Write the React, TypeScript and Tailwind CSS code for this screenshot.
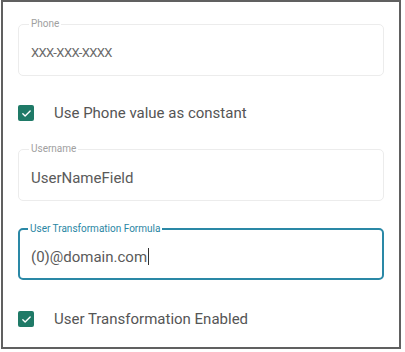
import React from 'react';

const font = { fontFamily: 'Roboto, "Liberation Sans", sans-serif' };

const Field = ({ label, value, focused, small }: { label: string; value: string; focused?: boolean; small?: boolean }) => (
  <div
    className={`relative h-[52px] rounded-[5px] flex items-center pl-[12px] pt-[6px] ${
      focused ? 'border-2 border-[#2a88a6]' : 'border border-[#ececec]'
    }`}
  >
    <span
      className={`absolute top-[-7px] bg-white px-[2px] text-[10px] leading-[12px] ${
        focused ? 'left-[8px] text-[#2a86a3]' : 'left-[10px] text-[#a0a0a0]'
      }`}
    >
      {label}
    </span>
    <span
      className={`${small ? 'text-[13px] tracking-[-0.6px] text-[#6a6a6a]' : 'text-[15px] text-[#5a5a5a]'} ${
        focused ? '-ml-[1px]' : ''
      }`}
    >
      {value}
      {focused && <span className="inline-block w-[1px] h-[17px] bg-[#333] align-middle ml-[1px] -mt-[2px]" />}
    </span>
  </div>
);

const Check = ({ label }: { label: string }) => (
  <div className="flex items-center h-[18px]">
    <div className="w-[16px] h-[16px] rounded-[2px] bg-[#1f7a67] flex items-center justify-center">
      <svg width="11" height="11" viewBox="0 0 24 24" fill="none" stroke="white" strokeWidth="3" strokeLinecap="round" strokeLinejoin="round">
        <path d="M4 12.5l5 5L20 6.5" />
      </svg>
    </div>
    <span className="ml-[20px] text-[15px] text-[#555]">{label}</span>
  </div>
);

export default function App() {
  return (
    <div className="bg-white w-[405px] h-[352px]" style={font}>
      <div className="ml-[1px] w-[400px] h-[349px] border-2 border-[#606060] px-[15px] flex flex-col">
        <div className="mt-[22px]">
          <Field label="Phone" value="XXX-XXX-XXXX" small />
        </div>
        <div className="mt-[28px]">
          <Check label="Use Phone value as constant" />
        </div>
        <div className="mt-[27px]">
          <Field label="Username" value="UserNameField" />
        </div>
        <div className="mt-[27px]">
          <Field label="User Transformation Formula" value="(0)@domain.com" focused />
        </div>
        <div className="mt-[30px]">
          <Check label="User Transformation Enabled" />
        </div>
      </div>
    </div>
  );
}
